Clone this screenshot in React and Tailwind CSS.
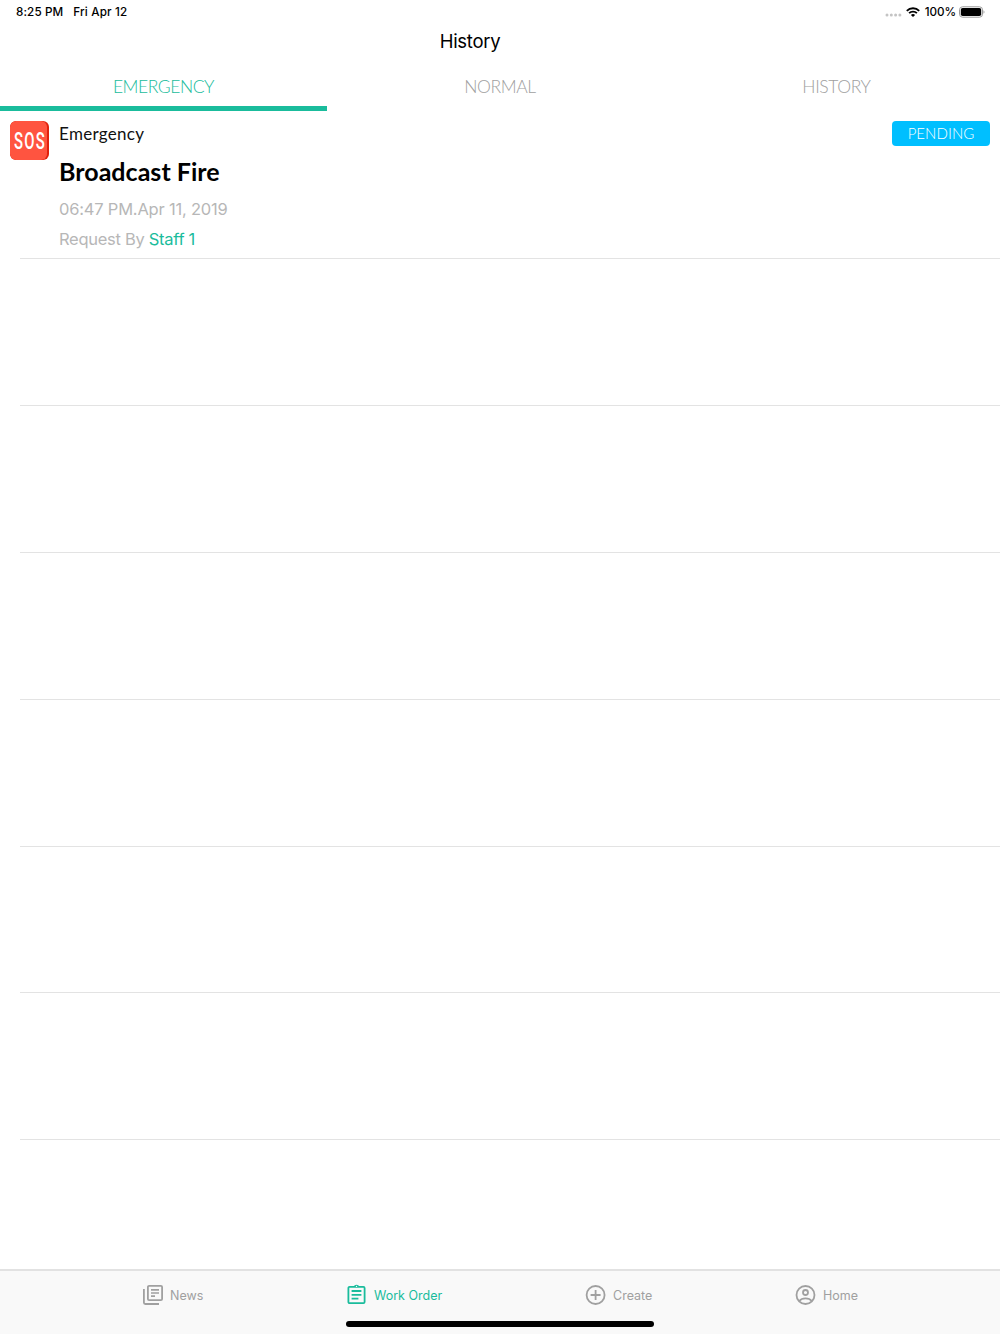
import React, { useState } from 'react';

const TABS = [
  { label: 'EMERGENCY', width: 'w-[327px]', tracking: 'tracking-[-0.45px]' },
  { label: 'NORMAL', width: 'w-[346px]', tracking: 'tracking-[-0.4px]' },
  { label: 'HISTORY', width: 'w-[327px]', tracking: 'tracking-[-0.4px]' },
];

const NAV_ITEMS = [
  { label: 'News', Icon: NewsIcon, pad: 'pl-[141px]', width: 'w-[345px]' },
  { label: 'Work Order', Icon: WorkOrderIcon, pad: '', width: 'w-[239px]' },
  { label: 'Create', Icon: CreateIcon, pad: '', width: 'w-[210px]' },
  { label: 'Home', Icon: HomeIcon, pad: '', width: 'w-[206px]' },
];

const EMPTY_ROWS = [1, 2, 3, 4, 5, 6];

function NewsIcon() {
  return (
    <svg viewBox="0 0 24 24" className="w-6 h-6 shrink-0" fill="none" stroke="currentColor" strokeWidth="1.8">
      <rect x="6.9" y="2.9" width="14.2" height="14.2" rx="1.2" />
      <path d="M2.9 6v13.6c0 .8.6 1.4 1.4 1.4H18" />
      <path d="M10 6.9h8M10 10h8M10 13.1h4" strokeWidth="1.6" />
    </svg>
  );
}

function WorkOrderIcon() {
  return (
    <svg viewBox="0 0 24 24" className="w-6 h-6 shrink-0" fill="none" stroke="currentColor" strokeWidth="1.8">
      <rect x="3.4" y="3.9" width="16.2" height="16.2" rx="1.2" />
      <path d="M8.6 4a3 3 0 0 1 5.8 0z" fill="currentColor" stroke="none" />
      <path d="M6.6 8h9.8M6.6 11.8h9.8M6.6 15.6h6.8" />
      <circle cx="11.5" cy="3.4" r="0.7" fill="#f9f9f9" stroke="none" />
    </svg>
  );
}

function CreateIcon() {
  return (
    <svg viewBox="0 0 24 24" className="w-6 h-6 shrink-0" fill="none" stroke="currentColor" strokeWidth="1.8">
      <circle cx="11.6" cy="12" r="9" />
      <path d="M11.6 7v10M6.6 12h10" />
    </svg>
  );
}

function HomeIcon() {
  return (
    <svg viewBox="0 0 24 24" className="w-6 h-6 shrink-0" fill="none" stroke="currentColor" strokeWidth="1.8">
      <circle cx="11.5" cy="12" r="9" />
      <circle cx="11.5" cy="9.5" r="2.5" />
      <path d="M5.3 18c1.3-1.8 3.7-2.7 6.2-2.7s4.9.9 6.2 2.7" />
    </svg>
  );
}

function StatusBar() {
  return (
    <div className="h-6 pt-px pl-4 pr-[15px] flex items-center text-[11.7px] font-medium text-black">
      <span className="tracking-[0.1px]">8:25 PM</span>
      <span className="ml-[10px] tracking-[0.15px]">Fri Apr 12</span>
      <div className="ml-auto flex items-center">
        <svg viewBox="0 0 17 4" className="w-[17px] h-1 mt-[5px]" fill="#c4c4c4">
          <circle cx="2" cy="2" r="1.5" />
          <circle cx="6.3" cy="2" r="1.5" />
          <circle cx="10.6" cy="2" r="1.5" />
          <circle cx="14.9" cy="2" r="1.5" />
        </svg>
        <svg viewBox="0 0 14 10" className="w-[14px] h-[10px] ml-1 -mt-px" fill="none" stroke="#000" strokeWidth="1.9">
          <path d="M.8 3.8a8.8 8.8 0 0 1 12.4 0" />
          <path d="M3.1 6.2a5.5 5.5 0 0 1 7.8 0" />
          <path d="M4.9 8a3 3 0 0 1 4.2 0L7 10z" fill="#000" stroke="none" />
        </svg>
        <span className="ml-[5px] tracking-[-0.1px]">100%</span>
        <svg viewBox="0 0 26 12" className="w-[26px] h-3 ml-[3px] -mt-px">
          <rect x="0.5" y="0.8" width="23" height="10.4" rx="3" fill="none" stroke="#9b9b9b" />
          <rect x="1.8" y="2" width="20.4" height="8" rx="1.8" fill="#000" />
          <path d="M24.5 4.3c1.3.5 1.3 2.9 0 3.4z" fill="#9b9b9b" />
        </svg>
      </div>
    </div>
  );
}

function SosBadge() {
  return (
    <div className="w-[39px] h-[39px] rounded-[6px] bg-[#e0210c] overflow-hidden shrink-0">
      <div className="w-[37px] h-[39px] rounded-[6px] bg-[#ff5440] flex items-center justify-center">
        <span className="font-['Roboto'] font-medium text-[24px] leading-none tracking-[2px] text-white scale-x-[0.62] pl-[4px]">
          SOS
        </span>
      </div>
    </div>
  );
}

function RequestRow() {
  return (
    <div className="h-[147px] flex items-start pt-[10px] pl-[10px] pr-[10px]">
      <SosBadge />
      <div className="ml-[10px] pt-px flex flex-col">
        <span className="font-['Lato'] text-[17px] leading-6 tracking-[0.3px] text-[#111]">Emergency</span>
        <span className="mt-[8px] font-['Lato'] font-bold text-[25px] leading-[34px] tracking-[0.03px] text-black">
          Broadcast Fire
        </span>
        <span className="mt-[9px] text-[16.5px] leading-6 tracking-[-0.2px] text-[#b7b7b7]">06:47 PM.Apr 11, 2019</span>
        <span className="mt-[6px] text-[16.5px] leading-6 tracking-[-0.29px] text-[#b7b7b7]">
          Request By <span className="text-[#1abc9c]">Staff 1</span>
        </span>
      </div>
      <div className="ml-auto w-[98px] h-[25px] pb-px rounded-[4px] bg-[#00bfff] flex items-center justify-center">
        <span className="font-['Lato'] font-light text-[15px] leading-6 tracking-[0.05px] text-white">PENDING</span>
      </div>
    </div>
  );
}

export default function App() {
  const [activeTab, setActiveTab] = useState(0);

  return (
    <div className="w-[1000px] h-[1334px] bg-white flex flex-col overflow-hidden font-['Inter',sans-serif]">
      <StatusBar />
      <h1 className="h-[38px] pt-[4px] pr-[60px] text-center text-[18.5px] leading-[26px] tracking-[-0.3px] text-black">
        History
      </h1>

      <div className="h-[49px] flex">
        {TABS.map((tab, i) => (
          <button
            key={tab.label}
            onClick={() => setActiveTab(i)}
            className={`${tab.width} ${tab.tracking} h-[49px] pt-[6px] font-['Lato'] font-light text-[17.5px] border-b-[5px] ${
              i === activeTab ? 'text-[#1abc9c] border-[#1abc9c]' : 'text-[#a0a0a0] border-transparent'
            }`}
          >
            {tab.label}
          </button>
        ))}
      </div>

      <main className="flex-1">
        <RequestRow />
        {EMPTY_ROWS.map((row) => (
          <div key={row} className="ml-5 h-[146.9px] border-t border-[#e3e3e3]" />
        ))}
        <div className="ml-5 border-t border-[#e3e3e3]" />
      </main>

      <nav className="h-[65px] shrink-0 bg-[#f9f9f9] border-t-2 border-[#e2e2e2] flex flex-col">
        <div className="flex h-12">
          {NAV_ITEMS.map(({ label, Icon, pad, width }) => (
            <div
              key={label}
              className={`${width} ${pad} flex items-center text-[12.5px] ${
                label === 'Work Order' ? 'text-[#1abc9c]' : 'text-[#a0a0a0]'
              }`}
            >
              <Icon />
              <span className="ml-[5px] pt-[2px]">{label}</span>
            </div>
          ))}
        </div>
        <div className="w-[308px] h-[6px] mx-auto mt-[2px] rounded-full bg-black" />
      </nav>
    </div>
  );
}
